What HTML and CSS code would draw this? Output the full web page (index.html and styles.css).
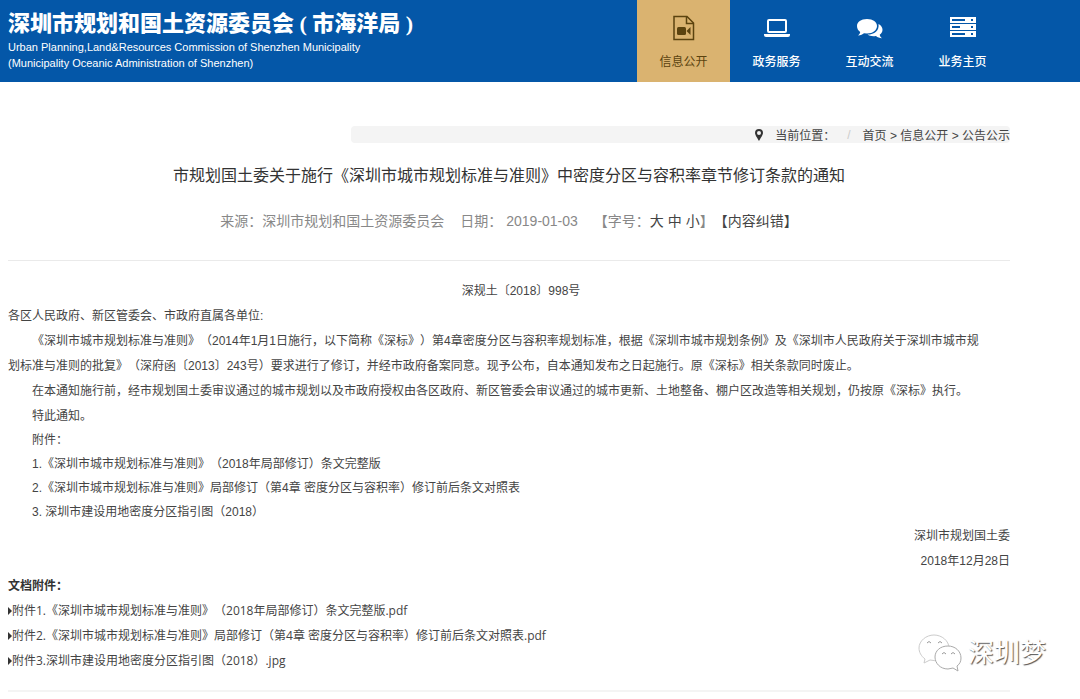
FILE: index.html
```html
<!DOCTYPE html>
<html lang="zh-cn">
<head>
    <meta charset="UTF-8">
    <title>深圳市规划和国土资源委员会（市海洋局）</title>
    <link rel="stylesheet" href="styles.css">
</head>
<body>
    <!-- 页头 -->
    <header class="header">
        <div class="brand">
            <div class="brand-name">深圳市规划和国土资源委员会 ( 市海洋局 )</div>
            <div class="brand-en">Urban Planning,Land&amp;Resources Commission of Shenzhen Municipality</div>
            <div class="brand-en">(Municipality Oceanic Administration of Shenzhen)</div>
        </div>
        <nav class="nav">
            <a class="nav-item active" href="#">
                <svg class="nav-icon" viewBox="0 0 28 28" fill="none" stroke="currentColor" stroke-width="1.500">
                    <path d="M4 2.500h13l6.500 6.500v16.500H4z"/>
                    <path d="M16.500 3v6.500H23"/>
                    <rect x="7" y="13" width="9" height="8" rx="1.500" fill="currentColor" stroke="none"/>
                    <path d="M16.500 17l4-4v8z" fill="currentColor" stroke="none"/>
                </svg>
                <span>信息公开</span>
            </a>
            <a class="nav-item" href="#">
                <svg class="nav-icon" viewBox="0 0 28 28" fill="none" stroke="currentColor" stroke-width="2">
                    <rect x="5" y="6" width="18" height="12" rx="1"/>
                    <path d="M1 20h26v1q0 2-2 2H3q-2 0-2-2z" fill="currentColor" stroke="none"/>
                </svg>
                <span>政务服务</span>
            </a>
            <a class="nav-item" href="#">
                <svg class="nav-icon" viewBox="0 0 28 28" fill="currentColor">
                    <path d="M11 5c6 0 10 3 10 7s-4 7.500-10 7.500l-3-.3c-1.500 1.300-3 2-6 2.300 1.200-1 2-2 2.200-3.500C2.200 16.500 1 14.500 1 12c0-4 4-7 10-7z"/>
                    <path d="M22.500 10c2.500 1.300 4 3.200 4 5.700 0 2-1 3.800-2.800 5 .3 1.500 1 2.500 2.300 3.600-2.500-.2-4.500-1-6-2.300-3.500.6-6.500 0-8.500-1.400 7 0 12-4 11-10.600z"/>
                </svg>
                <span>互动交流</span>
            </a>
            <a class="nav-item" href="#">
                <svg class="nav-icon" viewBox="0 0 28 28">
                    <path fill="currentColor" fill-rule="evenodd" d="M1 3h26v6H1zM3 5v2h13V5zM1 10h26v6H1zM3 12v2h8v-2zM1 17h26v6H1zM3 19v2h13v-2zM22 5v2h2V5zM22 12v2h2v-2zM22 19v2h2v-2z"/>
                </svg>
                <span>业务主页</span>
            </a>
        </nav>
    </header>

    <main class="container">
        <!-- 当前位置 -->
        <div class="crumb">
            <svg class="pin" viewBox="0 0 8 12"><path fill="currentColor" fill-rule="evenodd" d="M4 0a4 4 0 0 1 4 4c0 2-3 6-4 8C3 10 0 6 0 4a4 4 0 0 1 4-4zm0 2a2 2 0 1 0 0 4 2 2 0 0 0 0-4z"/></svg>
            <span class="crumb-label">当前位置：</span>
            <span class="slash">/</span>
            <span><a href="#">首页</a> &gt; <a href="#">信息公开</a> &gt; <a href="#">公告公示</a></span>
        </div>

        <h1 class="title">市规划国土委关于施行《深圳市城市规划标准与准则》中密度分区与容积率章节修订条款的通知</h1>
        <div class="meta">
            <span>来源：深圳市规划和国土资源委员会</span>
            <span>日期： 2019-01-03</span>
            <span>【字号：<a href="#">大</a> <a href="#">中</a> <a href="#">小</a>】<a href="#">【内容纠错】</a></span>
        </div>

        <!-- 正文 -->
        <article class="article">
            <p class="doc-no indent">深规土〔2018〕998号</p>
            <p>各区人民政府、新区管委会、市政府直属各单位:</p>
            <p class="indent">《深圳市城市规划标准与准则》（2014年1月1日施行，以下简称《深标》）第4章密度分区与容积率规划标准，根据《深圳市城市规划条例》及《深圳市人民政府关于深圳市城市规<br>划标准与准则的批复》（深府函〔2013〕243号）要求进行了修订，并经市政府备案同意。现予公布，自本通知发布之日起施行。原《深标》相关条款同时废止。</p>
            <p class="indent">在本通知施行前，经市规划国土委审议通过的城市规划以及市政府授权由各区政府、新区管委会审议通过的城市更新、土地整备、棚户区改造等相关规划，仍按原《深标》执行。</p>
            <div class="annex">
                <p class="indent">特此通知。</p>
                <p class="indent">附件：</p>
                <p class="indent">1.《深圳市城市规划标准与准则》（2018年局部修订）条文完整版</p>
                <p class="indent">2.《深圳市城市规划标准与准则》局部修订（第4章 密度分区与容积率）修订前后条文对照表</p>
                <p class="indent">3. 深圳市建设用地密度分区指引图（2018）</p>
            </div>
            <div class="sign">
                <p>深圳市规划国土委</p>
                <p>2018年12月28日</p>
            </div>
        </article>

        <!-- 附件下载 -->
        <section class="files">
            <h2>文档附件：</h2>
            <ul>
                <li><a href="#">附件1.《深圳市城市规划标准与准则》（2018年局部修订）条文完整版.pdf</a></li>
                <li><a href="#">附件2.《深圳市城市规划标准与准则》局部修订（第4章 密度分区与容积率）修订前后条文对照表.pdf</a></li>
                <li><a href="#">附件3.深圳市建设用地密度分区指引图（2018）.jpg</a></li>
            </ul>
        </section>
    </main>

    <!-- 水印 -->
    <div class="watermark">
        <svg viewBox="0 0 44 38" fill="#fff" stroke="#ccc">
            <path d="M16 1C8 1 1 7 1 14c0 4 2 8 6 11l-1 4 6-3c14 3 19-5 19-12S24 1 16 1z"/>
            <path d="M30 12c-8 0-13 5-13 11s5 12 13 12l5-1 5 3-1-5c3-2 4-5 4-8 0-7-6-12-13-12z" stroke="#aaa"/>
            <path d="M9 9q2-3 4 0M20 9q2-3 4 0M24 20q2-3 4 0M33 20q2-3 4 0" fill="none" stroke="#999"/>
        </svg>
        <span>深圳梦</span>
    </div>
</body>
</html>
```
FILE: styles.css
```css
* {
    box-sizing: border-box;
}
body {
    position: relative;
    margin: 0;
    background-color: #fff;
    color: #444;
    font-family: "Liberation Sans", "Noto Sans CJK SC", sans-serif;
    font-size: 12px;
    text-spacing-trim: space-all;
}
a {
    color: inherit;
    text-decoration: none;
}
h1, h2, p, ul {
    margin: 0;
    padding: 0;
    font-weight: normal;
}

/* 页头 */
.header {
    display: flex;
    justify-content: space-between;
    padding: 0 71px 0 8px;
    background-color: #0457a8;
    color: #fff;
}
.brand {
    padding-top: 9px;
}
.brand-name {
    font-family: "Liberation Serif", "Noto Sans CJK SC", serif;
    font-size: 22px;
    font-weight: 900;
    line-height: 30px;
}
.brand-en {
    font-size: 11px;
    line-height: 16px;
}
.nav {
    display: flex;
}
.nav-item {
    display: flex;
    flex-direction: column;
    align-items: center;
    gap: 10px;
    width: 93px;
    padding: 14px 0 10px;
    line-height: 20px;
    font-weight: 500;
}
.nav-item.active {
    background-color: #dab370;
    color: #5b430f;
    font-weight: normal;
}
.nav-icon {
    width: 28px;
    height: 28px;
}

.container {
    padding: 44px 70px 0 8px;
}

/* 当前位置 */
.crumb {
    display: flex;
    align-items: center;
    justify-content: flex-end;
    height: 17px;
    margin-left: 343px;
    background-color: #f4f4f4;
    border-radius: 4px;
}
.pin {
    width: 8px;
    height: 12px;
    margin-right: 12px;
    color: #333;
}
.slash {
    margin: 0 12px;
    color: #ccc;
}

/* 标题 */
.title {
    margin-top: 21px;
    color: #333;
    font-size: 16px;
    line-height: 24px;
    text-align: center;
}
.meta {
    display: flex;
    justify-content: center;
    gap: 16px;
    padding: 22px 0 28px;
    border-bottom: 1px solid #eaeaea;
    color: #888;
    font-size: 14px;
    line-height: 22px;
}
.meta a {
    color: #444;
}

/* 正文 */
.article {
    padding-top: 18px;
    line-height: 25px;
}
.doc-no {
    text-align: center;
}
.indent {
    text-indent: 24px;
}
.annex {
    line-height: 24px;
}
.sign {
    line-height: 25px;
    text-align: right;
}

/* 附件下载 */
.files {
    padding-bottom: 17px;
    border-bottom: 2px solid #f4f4f4;
    font-family: "Open Sans", "Noto Sans CJK SC", sans-serif;
    line-height: 25px;
}
.files h2 {
    color: #333;
    font-size: 12px;
    font-weight: bold;
    line-height: 24px;
}
.files ul {
    list-style: none;
}
.files li {
    display: flex;
    align-items: center;
}
.files li::before {
    content: "";
    border: 4px solid transparent;
    border-left-color: #333;
    border-right-width: 0;
}

/* 水印 */
.watermark {
    position: absolute;
    right: 34px;
    bottom: 20px;
    display: flex;
    align-items: center;
    gap: 6px;
    color: #fff;
    font-size: 26px;
    line-height: 38px;
    text-shadow: 1px 1px 1px #555;
}
.watermark svg {
    width: 44px;
    height: 38px;
}
```
